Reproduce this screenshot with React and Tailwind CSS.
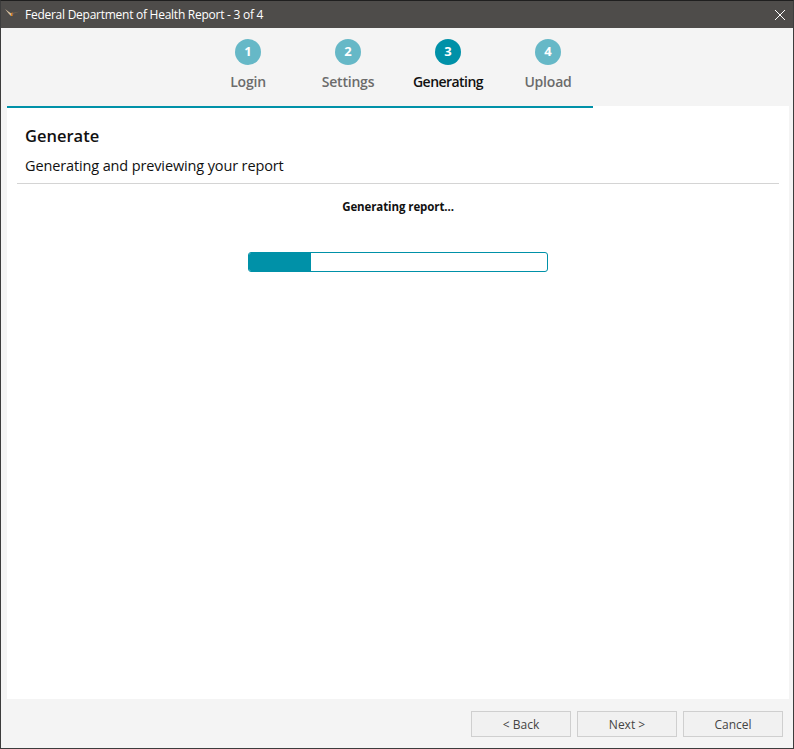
const font = { fontFamily: '"Open Sans", "Noto Sans", sans-serif' };

function Step({ n, label, active }) {
  return (
    <div className="w-[100px] flex flex-col items-center">
      <div className={`w-[26px] h-[26px] rounded-full flex items-center justify-center text-white text-[13px] font-bold ${active ? 'bg-[#0091a8]' : 'bg-[#66b8c7]'}`}>{n}</div>
      <div className={`mt-[7px] text-[14px] leading-[20px] font-semibold whitespace-nowrap ${active ? 'text-[#111111] tracking-[-0.55px]' : 'text-[#6b6b6b] tracking-[-0.2px]'}`}>{label}</div>
    </div>
  );
}

function Btn({ children }) {
  return (
    <div className="w-[100px] h-[26px] pt-[1px] border border-[#cfcfcf] bg-[#f1f1f1] flex items-center justify-center text-[12px] text-[#444444]">{children}</div>
  );
}

export default function App() {
  return (
    <div className="w-[794px] h-[749px] flex flex-col bg-[#f4f4f4] border border-[#3c3c3c] border-t-[#1f1f1f] overflow-hidden" style={font}>
      <div className="h-[27px] shrink-0 bg-[#4e4c4a] flex items-center relative pl-[24px] pr-[7px]">
        <svg className="absolute left-[3px] top-[7px]" width="17" height="11" viewBox="0 0 17 11">
          <path d="M1 1 L5 4 L8 6 L7 8 L5 6 Z" fill="#d8c0a0" />
          <path d="M7 5.5 L10 4.5 L16 3.6 L10 5.5 L8.5 8 Z" fill="#6e6252" />
          <path d="M7 5 L9 4.5 L8.5 8 L7 8 Z" fill="#d98a20" />
          <path d="M8 5.5 L9 5.5 L8.5 7.5 Z" fill="#6a3fa0" />
        </svg>
        <span className="text-[12px] text-white flex-1 tracking-[-0.26px]">Federal Department of Health Report - 3 of 4</span>
        <svg width="12" height="12" viewBox="0 0 12 12" className="text-white">
          <path d="M1 1 L11 11 M11 1 L1 11" stroke="currentColor" strokeWidth="1" fill="none" />
        </svg>
      </div>
      <div className="h-[78px] shrink-0 flex justify-center pt-[11px] pl-[2px]">
        <Step n="1" label="Login" />
        <Step n="2" label="Settings" />
        <Step n="3" label="Generating" active />
        <Step n="4" label="Upload" />
      </div>
      <div className="flex-1 ml-[6px] mr-[4px] bg-white flex flex-col relative">
        <div className="absolute left-0 top-0 w-[586px] h-[2px] bg-[#0091a8]" />
        <div className="pl-[18px] pt-[19px]">
          <div className="text-[16.5px] leading-[22px] font-semibold text-[#111111]">Generate</div>
          <div className="mt-[9px] text-[14.5px] leading-[20px] text-[#111111] tracking-[-0.13px]">Generating and previewing your report</div>
        </div>
        <div className="mx-[10px] mt-[7px] h-px bg-[#d4d4d4]" />
        <div className="flex flex-col items-center">
          <div className="mt-[15px] text-[11.5px] leading-[16px] font-bold text-[#111111] tracking-[-0.1px]">Generating report...</div>
          <div className="mt-[37px] w-[300px] h-[20px] rounded-[3px] border border-[#0091a8] bg-white overflow-hidden">
            <div className="h-full w-[62px] bg-[#0091a8]" />
          </div>
        </div>
      </div>
      <div className="h-[49px] shrink-0 flex justify-end items-start gap-[6px] pt-[12px] pr-[10px]">
        <Btn>&lt; Back</Btn>
        <Btn>Next &gt;</Btn>
        <Btn>Cancel</Btn>
      </div>
    </div>
  );
}
